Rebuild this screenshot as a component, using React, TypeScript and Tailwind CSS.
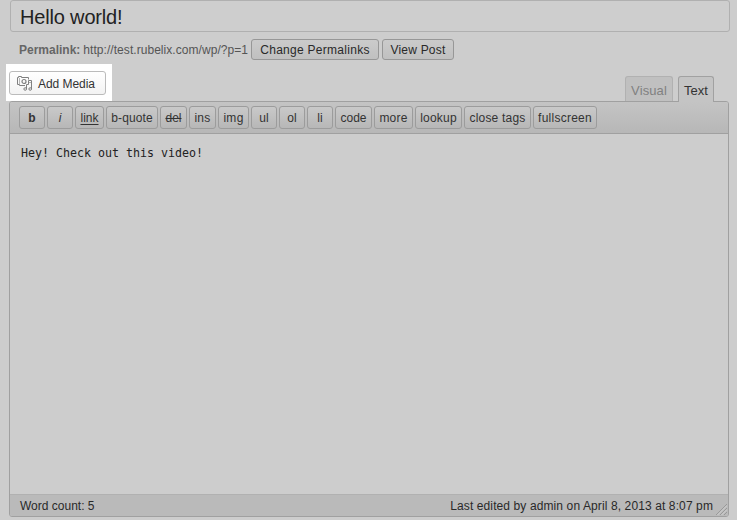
const quickTags = [
  { label: 'b', box: 'w-[26px] font-bold' },
  { label: 'i', box: 'w-[26px] italic' },
  { label: 'link', box: 'w-[29px] underline decoration-1 underline-offset-2 [text-decoration-skip-ink:none]' },
  { label: 'b-quote', box: 'w-[52px] tracking-[0.12px]' },
  { label: 'del', box: 'w-[27px] line-through' },
  { label: 'ins', box: 'w-[27px] tracking-[0.3px]' },
  { label: 'img', box: 'w-[31px] tracking-[0.3px]' },
  { label: 'ul', box: 'w-[26px]' },
  { label: 'ol', box: 'w-[26px]' },
  { label: 'li', box: 'w-[26px]' },
  { label: 'code', box: 'w-[37px]' },
  { label: 'more', box: 'w-[39px] tracking-[0.2px]' },
  { label: 'lookup', box: 'w-[47px] tracking-[0.2px]' },
  { label: 'close tags', box: 'w-[67px] tracking-[0.2px]' },
  { label: 'fullscreen', box: 'w-[64px] tracking-[0.25px]' },
];

function MediaIcon() {
  return (
    <svg className="shrink-0" width="16" height="16" viewBox="0 0 16 16" fill="none" stroke="#808080">
      <path d="M8 10.5H2.5V9.5H0.5V2.5H1.5V1.5H4.5V2.5H11.5V4.5" />
      <path d="M2.5 3V9" stroke="#b8b8b8" />
      <circle cx="7" cy="6.5" r="2" strokeWidth="1.2" />
      <path d="M9.5 14V9.5H11.5V5.5H14.5V14" />
      <path d="M12 7.5H14" stroke="#b0b0b0" />
      <circle cx="8.2" cy="14" r="1.3" />
      <circle cx="13.2" cy="14" r="1.3" />
    </svg>
  );
}

export default function App() {
  return (
    <div className="h-[520px] w-[737px] overflow-hidden bg-[#cdcdcd] font-['Liberation_Sans',Arial,sans-serif] text-[12px] text-[#292929]">
      <div className="ml-[10px] flex h-[32px] w-[720px] items-center rounded-[3px] border border-[#b0b0b0] bg-[#cecece] pl-[9px] text-[20px] leading-[32px] text-[#222]">
        <span className="mt-[2px] tracking-[-0.17px] whitespace-nowrap">Hello world!</span>
      </div>

      <div className="flex h-[32px] items-start pt-[7px] pl-[19px] whitespace-nowrap">
        <div className="flex w-[232px] gap-[3px] pt-[3px] leading-[16px] text-[#555]">
          <b className="text-[#666]">Permalink:</b>
          <span className="tracking-[0.05px]">http://test.rubelix.com/wp/?p=1</span>
        </div>
        <button className="h-[21px] w-[128px] rounded-[3px] border border-[#979797] bg-linear-to-b from-[#cbcbcb] to-[#c0c0c0] pt-px leading-[19px] tracking-[0.28px]">Change Permalinks</button>
        <button className="ml-[3px] h-[21px] w-[72px] rounded-[3px] border border-[#979797] bg-linear-to-b from-[#cbcbcb] to-[#c0c0c0] pt-px leading-[19px] tracking-[0.2px]">View Post</button>
      </div>

      <div className="flex h-[37px] pl-[6px]">
        <div className="h-[37px] w-[106px] bg-white pt-[7px] pl-[3px]">
          <button className="flex h-[24px] w-[97px] items-center rounded-[3px] border border-[#bbb] bg-linear-to-b from-white to-[#f3f3f3] pl-[7px] whitespace-nowrap text-[#333]">
            <MediaIcon />
            <span className="mt-[2px] ml-[5px] tracking-[-0.05px]">Add Media</span>
          </button>
        </div>
        <div className="ml-[513px] flex gap-[5px] pt-[12px] text-[13px] leading-[27px]">
          <div className="h-[25px] w-[48px] rounded-t-[3px] border border-b-0 border-[#b1b1b1] bg-[#c0c0c0] text-center tracking-[0.1px] text-[#808080]">Visual</div>
          <div className="relative z-10 h-[26px] w-[36px] rounded-t-[3px] border border-b-0 border-[#a1a1a1] bg-[#c4c4c4] text-center text-[#333]">Text</div>
        </div>
      </div>

      <div className="ml-[9px] flex h-[416px] w-[720px] flex-col overflow-hidden rounded-[3px] border border-[#a0a0a0] bg-[#cdcdcd]">
        <div className="flex h-[32px] shrink-0 gap-[2px] border-b border-[#a0a0a0] bg-linear-to-b from-[#c4c4c4] to-[#b7b7b7] pt-[4px] pl-[9px]">
          {quickTags.map((tag) => (
            <button
              key={tag.label}
              className={`h-[23px] rounded-[3px] border border-[#9c9c9c] bg-linear-to-b from-[#c9c9c9] to-[#b7b7b7] pt-px text-center leading-[21px] whitespace-nowrap text-[#333] ${tag.box}`}
            >
              {tag.label}
            </button>
          ))}
        </div>
        <div className="flex-1 pt-[12px] pl-[11px] font-['DejaVu_Sans_Mono',monospace] text-[11.63px] leading-[15px] whitespace-pre text-[#222]">
          Hey! Check out this video!
        </div>
        <div className="flex h-[22px] shrink-0 border-t border-[#b1b1b1] bg-[#bababa] pl-[10px] leading-[23px] whitespace-nowrap">
          <span>Word count: 5</span>
          <span className="mr-[3px] ml-auto tracking-[0.11px]">Last edited by admin on April 8, 2013 at 8:07 pm</span>
          <svg className="mt-[8px] mr-[1px]" width="11" height="12" viewBox="0 0 11 12" fill="none">
            <path d="M0 12L11 1M4 12L11 5M8 12L11 9" stroke="#999" />
            <path d="M1.5 12L11 2.5M5.5 12L11 6.5" stroke="#d0d0d0" />
          </svg>
        </div>
      </div>
    </div>
  );
}
